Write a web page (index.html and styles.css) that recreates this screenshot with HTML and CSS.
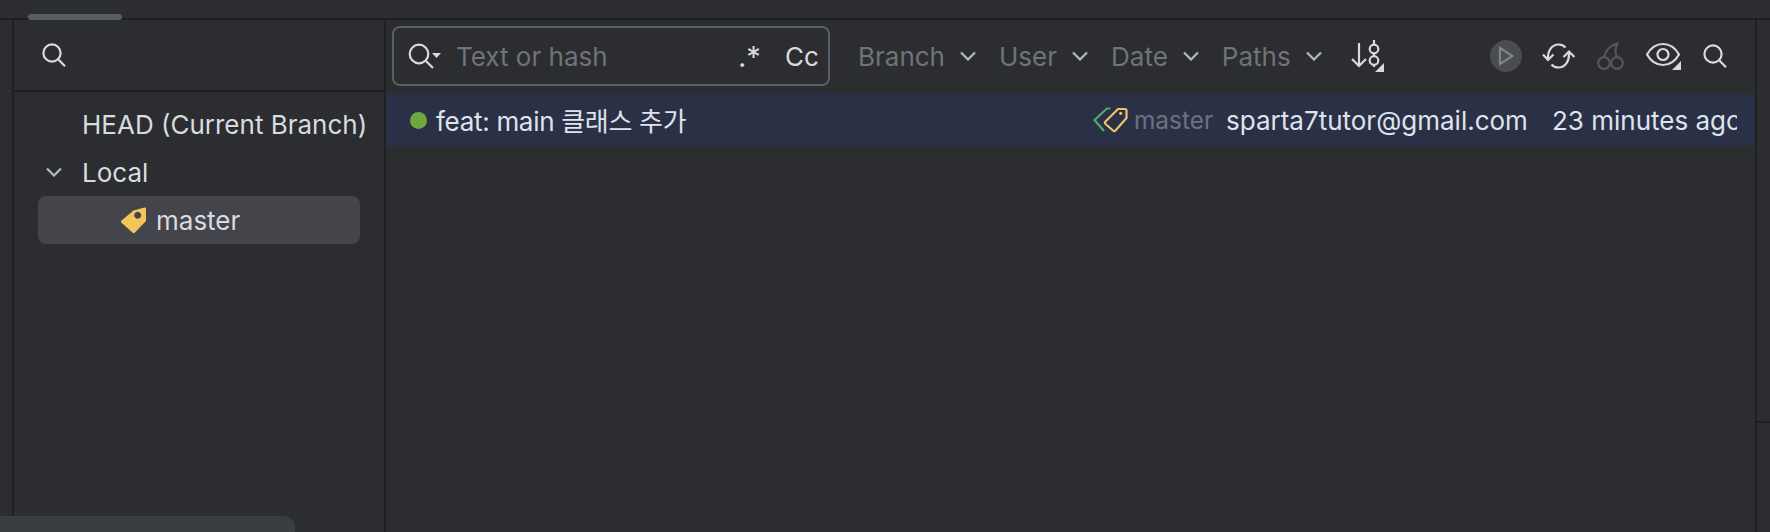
FILE: index.html
```html
<!DOCTYPE html>
<html lang="ko">
<head>
<meta charset="utf-8">
<title>Git Log</title>
<link rel="stylesheet" href="styles.css">
</head>
<body>
<div class="topbar"><div class="thumb"></div></div>
<div class="workspace">
  <div class="strip"></div>
  <aside class="sidebar">
    <div class="side-search">
      <svg class="ic24" viewBox="0 0 24 24"><circle cx="10" cy="10" r="8.6"/><path d="M16.4 16.4 23 23.2"/></svg>
    </div>
    <div class="tree">
      <div class="tree-row"><span class="tree-text">HEAD (Current Branch)</span></div>
      <div class="tree-row">
        <svg class="tree-chevron" viewBox="0 0 16 10"><path d="M1 1.5 8 8.5 15 1.5"/></svg>
        <span class="tree-text">Local</span>
      </div>
      <div class="tree-row selected">
        <svg class="tag-solid" viewBox="0 0 27 28"><path fill-rule="evenodd" d="M13.500 4.500 24.500 1.500c1-.2 1.500.4 1.500 1.300V15L15 26.500c-.8.8-1.800.8-2.600 0L1.500 16.800c-.7-.7-.7-1.700 0-2.400ZM17.700 5.700a3.500 3.500 0 1 0 .01 0Z"/></svg>
        <span>master</span>
      </div>
    </div>
  </aside>
  <main class="log">
    <div class="toolbar">
      <div class="search-box">
        <svg class="search-ic" viewBox="0 0 34 26"><circle cx="11" cy="11" r="9.300"/><path d="M18 18 25 25"/><path class="fill" d="M24 10h9l-4.500 5Z"/></svg>
        <span class="placeholder">Text or hash</span>
        <span class="regex">.*</span>
        <span class="case">Cc</span>
      </div>
      <div class="filters">
        <div class="filter">Branch<svg class="chev" viewBox="0 0 16 10"><path d="M1 1.500 8 8.500 15 1.500"/></svg></div>
        <div class="filter">User<svg class="chev" viewBox="0 0 16 10"><path d="M1 1.500 8 8.500 15 1.500"/></svg></div>
        <div class="filter">Date<svg class="chev" viewBox="0 0 16 10"><path d="M1 1.500 8 8.500 15 1.500"/></svg></div>
        <div class="filter">Paths<svg class="chev" viewBox="0 0 16 10"><path d="M1 1.500 8 8.500 15 1.500"/></svg></div>
      </div>
      <svg class="sort-ic" viewBox="0 0 33 32"><path d="M8 3V26M1 19 8 26 15 19"/><path d="M23 0V4M23 13V16M23 25V27"/><circle cx="23" cy="9" r="4.300"/><circle cx="23" cy="20.500" r="4.300"/><path class="fill" d="M33 23v9h-9Z"/></svg>
      <div class="actions">
        <div class="play"><svg viewBox="0 0 16 20"><path d="M2 2 14.500 10 2 18Z"/></svg></div>
        <svg class="sync" viewBox="0 0 33 28"><path d="M1 12.500 6 18 11.500 12.500M6 17C5.500 8.500 10 2.500 16.500 2.500c3 0 5.500 1.200 7 3"/><path d="M21.500 15 27 9.500 32.500 15M27 10.500C27.500 19.500 23 25.500 16.500 25.500c-3 0-5.500-1.200-7-3"/></svg>
        <svg class="cherry" viewBox="0 0 27 28"><circle cx="7" cy="21" r="5.800"/><circle cx="20" cy="21" r="5.800"/><path d="M7 15C9 8 14 3 20.500 1.500 18 6 18 11 20 15"/></svg>
        <svg class="eye" viewBox="0 0 35 28"><path d="M1 12.500C5 5.500 11 2 17 2s12 3.500 16 10.500C29 19.500 23 23 17 23S5 19.500 1 12.500Z"/><circle cx="17" cy="12.500" r="5.500"/><path class="fill" d="M35 19v9h-9Z"/></svg>
        <svg class="ic24" viewBox="0 0 24 24"><circle cx="10" cy="10" r="8.600"/><path d="M16.400 16.400 23 23.200"/></svg>
      </div>
    </div>
    <div class="commit">
      <span class="dot"></span>
      <span class="subject">feat: main 클래스 추가</span>
      <svg class="tags" viewBox="0 0 35 26"><path class="green" d="M17.500 1.500H14L1.500 13 11 24"/><path class="yellow" d="M25 2H32c1 0 1.500.5 1.500 1.500V11L22.500 23.500c-.8.8-1.700.8-2.500 0L12.500 17c-.8-.8-.8-1.700 0-2.500Z"/><circle class="pin" cx="27.700" cy="6.300" r="1.600"/></svg>
      <span class="ref">master</span>
      <span class="author">sparta7tutor@gmail.com</span>
      <span class="time">23 minutes ago</span>
    </div>
  </main>
  <div class="right-strip"><div class="right-top"></div></div>
</div>
<div class="popup"></div>
</body>
</html>
```
FILE: styles.css
```css
* { box-sizing: border-box; }
html, body { height: 100%; }
body {
  margin: 0;
  background: #2b2d30;
  color: #d9dbe0;
  font-family: Inter, "Noto Sans CJK KR", sans-serif;
  font-size: 26px;
  display: flex;
  flex-direction: column;
  overflow: hidden;
}
svg { fill: none; stroke: currentColor; stroke-width: 2.2; flex: none; display: block; }
svg .fill { fill: #d8dade; stroke: none; }

.topbar { height: 20px; flex: none; border-bottom: 2px solid #1f2023; padding: 14px 0 0 28px; }
.thumb { width: 94px; height: 6px; border-radius: 3px; background: #5a5d63; }

.workspace { flex: 1; display: flex; min-height: 0; }
.strip { width: 14px; flex: none; border-right: 2px solid #1f2023; }

.sidebar { width: 372px; flex: none; border-right: 2px solid #1f2023; }
.side-search { height: 72px; padding: 23px 0 0 28px; border-bottom: 2px solid #1f2023; color: #d8dade; }
.ic24 { width: 24px; height: 24px; color: #d8dade; }
.tree { padding: 8px 24px 0 24px; }
.tree-row { height: 48px; display: flex; align-items: center; position: relative; padding-left: 44px; }
.tree-text { white-space: nowrap; }
.tree-chevron { position: absolute; left: 8px; top: 19px; width: 16px; height: 10px; color: #b4b8bf; }
.tree-row.selected { background: #43454a; border-radius: 8px; padding-left: 82px; gap: 9px; }
.tag-solid { width: 27px; height: 28px; fill: #f2c55c; stroke: none; }

.log { flex: 1; min-width: 0; }
.toolbar { height: 74px; display: flex; align-items: center; padding: 0 0 2px 6px; }
.search-box {
  width: 438px;
  height: 60px;
  border: 2px solid #5a5d63;
  border-radius: 8px;
  display: flex;
  align-items: center;
  padding-left: 14px;
  color: #d8dade;
}
.search-ic { width: 34px; height: 26px; }
.placeholder { margin-left: 14px; color: #6f737a; width: 282px; white-space: nowrap; }
.regex { width: 47px; font-size: 29px; }
.case { font-size: 26px; }

.filters { display: flex; gap: 23px; margin-left: 28px; color: #6f737a; }
.filter { display: flex; align-items: center; gap: 15px; white-space: nowrap; }
.chev { width: 16px; height: 10px; color: #b4b8bf; }
.sort-ic { width: 33px; height: 32px; margin-left: 29px; color: #d8dade; }

.actions { display: flex; align-items: center; margin-left: 106px; color: #d8dade; }
.play { width: 32px; height: 32px; border-radius: 50%; background: #4a4c50; display: flex; align-items: center; justify-content: center; color: #808388; }
.play svg { width: 16px; height: 20px; }
.sync { width: 33px; height: 28px; margin-left: 20px; }
.cherry { width: 27px; height: 28px; margin-left: 22px; color: #55575b; }
.eye { width: 35px; height: 28px; margin-left: 22px; }
.actions .ic24 { margin-left: 22px; }

.commit {
  height: 52px;
  width: 1368px;
  background: #2a3146;
  display: flex;
  align-items: center;
  padding-left: 24px;
  color: #dfe3ec;
  white-space: nowrap;
  overflow: hidden;
}
.dot { width: 17px; height: 17px; border-radius: 50%; background: #6fa83f; flex: none; }
.subject { margin-left: 9px; width: 657px; flex: none; letter-spacing: -0.3px; padding-bottom: 2px; }
.tags { width: 35px; height: 26px; }
.ref { margin-left: 6px; color: #6d7280; width: 92px; flex: none; font-size: 24.4px; }
.tags .green { stroke: #55a76a; }
.tags .yellow { stroke: #e9c46a; }
.tags .pin { fill: #e9c46a; stroke: none; }
.author { width: 326px; flex: none; }
.time { width: 185px; flex: none; overflow: hidden; }

.right-strip { width: 15px; flex: none; border-left: 2px solid #1f2023; margin-left: 1px; }
.right-top { height: 403px; border-bottom: 2px solid #1f2023; }

.popup {
  position: absolute;
  left: 0;
  bottom: 0;
  width: 295px;
  height: 17px;
  background: #3b3e41;
  border-top: 1px solid #2a2c2e;
  border-top-right-radius: 12px;
}
```
